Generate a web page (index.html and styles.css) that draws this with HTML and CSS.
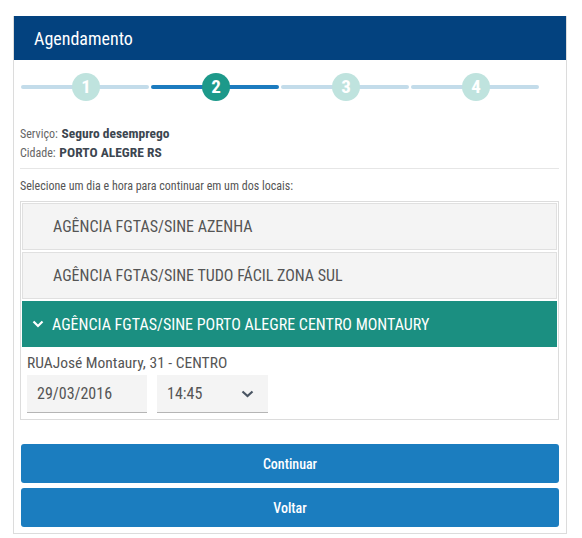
FILE: index.html
```html
<!DOCTYPE html>
<html lang="pt-BR">
<head>
<meta charset="utf-8">
<title>Agendamento</title>
<link rel="stylesheet" href="styles.css">
</head>
<body>
<div class="card">
  <div class="card-header">Agendamento</div>
  <div class="card-body">
    <div class="stepper">
      <div class="step"><span class="bar"></span><span class="dot">1</span></div>
      <div class="step active"><span class="bar"></span><span class="dot">2</span></div>
      <div class="step"><span class="bar"></span><span class="dot">3</span></div>
      <div class="step"><span class="bar"></span><span class="dot">4</span></div>
    </div>
    <div class="info">
      <div class="info-row"><span class="label">Serviço:</span> <span class="value">Seguro desemprego</span></div>
      <div class="info-row"><span class="label">Cidade:</span> <span class="value">PORTO ALEGRE RS</span></div>
    </div>
    <p class="hint">Selecione um dia e hora para continuar em um dos locais:</p>
    <div class="accordion">
      <div class="acc-head">AGÊNCIA FGTAS/SINE AZENHA</div>
      <div class="acc-head">AGÊNCIA FGTAS/SINE TUDO FÁCIL ZONA SUL</div>
      <div class="acc-head open">
        <svg class="chev" width="12" height="8" viewBox="0 0 12 8"><path d="M1.5 1.5 L6 6 L10.5 1.5" fill="none" stroke="#fff" stroke-width="2.2"/></svg>
        AGÊNCIA FGTAS/SINE PORTO ALEGRE CENTRO MONTAURY
      </div>
      <div class="acc-body">
        <div class="address">RUAJosé Montaury, 31 - CENTRO</div>
        <div class="fields">
          <div class="field date">29/03/2016</div>
          <div class="field time">14:45
            <svg class="chev-dark" width="13" height="8" viewBox="0 0 13 8"><path d="M1.5 1.5 L6.5 6 L11.5 1.5" fill="none" stroke="#4a5563" stroke-width="2.2"/></svg>
          </div>
        </div>
      </div>
    </div>
    <div class="actions">
      <button class="btn">Continuar</button>
      <button class="btn">Voltar</button>
    </div>
  </div>
</div>
</body>
</html>
```

FILE: styles.css
```css
* { box-sizing: border-box; }
body {
  margin: 0;
  background: #fff;
  font-family: "Roboto", "Liberation Sans", sans-serif;
  font-stretch: 85%;
  color: #555;
}
.card {
  margin: 16px 0 0 13px;
  width: 554px;
  border: 1px solid #dcdcdc;
  border-top: none;
}
.card-header {
  height: 44px;
  background: #03427f;
  color: #fff;
  font-size: 18px;
  line-height: 46px;
  padding-left: 20px;
}
.card-body {
  padding: 13px 7px 6px 6px;
}
.stepper {
  display: grid;
  grid-template-columns: repeat(4, 130px);
  height: 28px;
  padding-left: 1px;
}
.step {
  position: relative;
  display: flex;
  align-items: center;
  justify-content: center;
}
.step .bar {
  position: absolute;
  left: 0;
  right: 2px;
  top: 12px;
  height: 4px;
  border-radius: 2px;
  background: #c3dcea;
}
.step .dot {
  position: relative;
  width: 28px;
  height: 28px;
  border-radius: 50%;
  background: #bfe3de;
  color: #fff;
  font-weight: 700;
  font-size: 19px;
  line-height: 28px;
  text-align: center;
}
.step.active .bar { background: #1c7bbf; }
.step.active .dot { background: #1d998a; }
.info {
  margin-top: 22px;
  padding-bottom: 7px;
  border-bottom: 1px solid #e6e6e6;
}
.info-row {
  height: 19px;
  line-height: 19px;
}
.label { font-size: 12px; color: #666; }
.value { font-size: 13.5px; font-weight: 700; color: #3c4650; }
.hint {
  margin: 9px 0 6px;
  font-size: 12px;
  line-height: 17px;
  color: #555;
}
.accordion {
  border: 1px solid #dcdcdc;
  padding: 1px 1px 0;
}
.acc-head {
  height: 47px;
  margin-bottom: 2px;
  background: #f4f4f4;
  border: 1px solid #e0e0e0;
  padding-left: 30px;
  display: flex;
  align-items: center;
  font-size: 16px;
  color: #555;
}
.acc-head.open {
  background: #1b8f81;
  border-color: #1b8f81;
  color: #fff;
  padding-left: 9px;
  margin-bottom: 0;
  height: 46px;
}
.chev { margin-right: 8px; }
.acc-body {
  padding: 7px 6px 6px 5px;
}
.address {
  font-size: 15.5px;
  line-height: 18px;
  color: #555;
}
.fields {
  display: flex;
  gap: 10px;
  margin-top: 3px;
}
.field {
  height: 38px;
  background: #f4f4f4;
  border-bottom: 1px solid #b5b5b5;
  font-size: 16px;
  color: #555;
  display: flex;
  align-items: center;
}
.date { width: 120px; padding-left: 10px; }
.time { width: 111px; padding-left: 10px; justify-content: space-between; padding-right: 14px; }
.actions {
  margin-top: 24px;
  display: flex;
  flex-direction: column;
  gap: 5px;
  padding-left: 1px;
}
.btn {
  height: 39px;
  border: none;
  border-radius: 3px;
  background: #1b7dbf;
  color: #fff;
  font-family: inherit;
  font-stretch: 85%;
  font-size: 14px;
  font-weight: 500;
}
```
